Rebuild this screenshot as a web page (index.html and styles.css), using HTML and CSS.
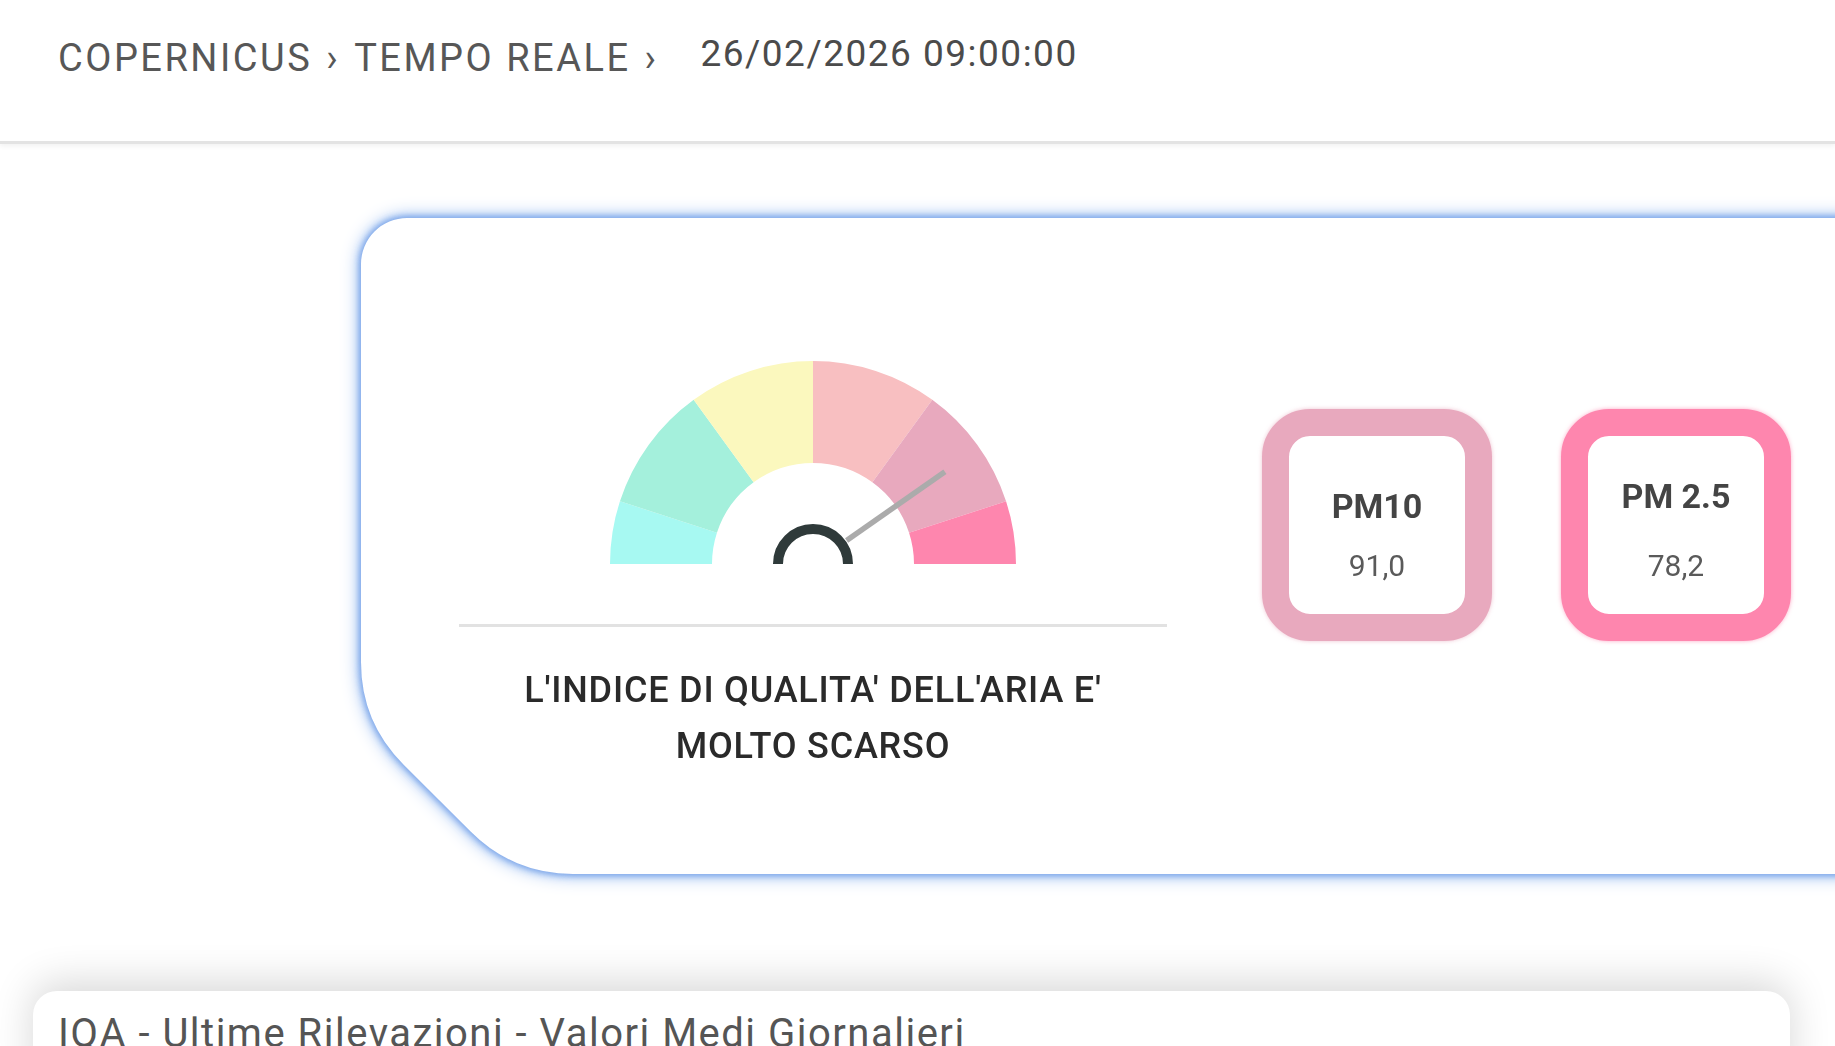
FILE: index.html
```html
<!DOCTYPE html>
<html lang="it">
<head>
    <meta charset="UTF-8">
    <meta name="viewport" content="width=device-width, initial-scale=1.0">
    <title>Copernicus - Tempo Reale</title>
    <link rel="stylesheet" href="styles.css">
</head>
<body>
    <header class="topbar">
        <nav class="crumbs">
            <span>COPERNICUS</span>
            <span class="sep">›</span>
            <span>TEMPO REALE</span>
            <span class="sep">›</span>
        </nav>
        <time class="stamp">26/02/2026 09:00:00</time>
    </header>

    <main>
        <section class="hero">
            <div class="aqi-glow">
                <div class="aqi-card">
                    <div class="gauge-col">
                        <svg class="gauge" viewBox="-205 -205 410 205">
                            <!-- sectors, left to right -->
                            <path fill="#a7f9f2" d="M -203 0 A 203 203 0 0 1 -193.07 -62.73 L -96.06 -31.21 A 101 101 0 0 0 -101 0 Z"/>
                            <path fill="#a4f0dc" d="M -193.07 -62.73 A 203 203 0 0 1 -119.32 -164.23 L -59.37 -81.71 A 101 101 0 0 0 -96.06 -31.21 Z"/>
                            <path fill="#fbf8be" d="M -119.32 -164.23 A 203 203 0 0 1 0 -203 L 0 -101 A 101 101 0 0 0 -59.37 -81.71 Z"/>
                            <path fill="#f8bfc1" d="M 0 -203 A 203 203 0 0 1 119.32 -164.23 L 59.37 -81.71 A 101 101 0 0 0 0 -101 Z"/>
                            <path fill="#e8a9be" d="M 119.32 -164.23 A 203 203 0 0 1 193.07 -62.73 L 96.06 -31.21 A 101 101 0 0 0 59.37 -81.71 Z"/>
                            <path fill="#fe86ae" d="M 193.07 -62.73 A 203 203 0 0 1 203 0 L 101 0 A 101 101 0 0 0 96.06 -31.21 Z"/>
                            <line x1="33.6" y1="-23.5" x2="131.9" y2="-92.3" stroke="#ababab" stroke-width="5.5"/>
                            <path d="M -35 0 A 35 35 0 0 1 35 0" fill="none" stroke="#2f3a3a" stroke-width="10"/>
                        </svg>
                        <div class="divider"></div>
                        <p class="caption">L'INDICE DI QUALITA' DELL'ARIA E' MOLTO SCARSO</p>
                    </div>

                    <div class="pm-list">
                        <div class="pm-box pm-mauve">
                            <span class="pm-label">PM10</span>
                            <span class="pm-value">91,0</span>
                        </div>
                        <div class="pm-box pm-pink">
                            <span class="pm-label pm-label-high">PM 2.5</span>
                            <span class="pm-value">78,2</span>
                        </div>
                    </div>
                </div>
            </div>
        </section>

        <section class="panel">
            <h2>IQA - Ultime Rilevazioni - Valori Medi Giornalieri</h2>
        </section>
    </main>
</body>
</html>
```

FILE: styles.css
```css
html, body {
    overflow: hidden;
}

body {
    margin: 0;
    background-color: #fff;
    font-family: Roboto, "Liberation Sans", sans-serif;
    color: #333;
}

.topbar {
    display: flex;
    align-items: flex-start;
    height: 144px;
    box-sizing: border-box;
    padding: 36px 58px 0;
    background: #fff;
    border-bottom: 3px solid #e3e3e3;
    box-shadow: 0 2px 5px rgba(0, 0, 0, 0.06);
}

.crumbs {
    display: flex;
    font-size: 38px;
    color: #575757;
    letter-spacing: 2.5px;
}

.crumbs .sep {
    margin: 0 14px;
}

.stamp {
    margin-left: 28px;
    margin-top: -4px;
    font-size: 37px;
    letter-spacing: 1.5px;
    color: #4b4b4b;
}

.hero {
    overflow: hidden;
    padding: 74px 0 24px 361px;
}

/* blue halo around the clipped card */
.aqi-glow {
    filter: drop-shadow(0 0 3px #7fa8ea) drop-shadow(0 0 3px #86adeb) drop-shadow(0 0 8px #a6c5f3);
}

.aqi-card {
    display: flex;
    align-items: flex-start;
    width: 1540px;
    height: 656px;
    box-sizing: border-box;
    padding: 141px 0 0 98px;
    background: #fff;
    clip-path: path('M 46 0 H 1540 V 656 H 212 Q 152 656 109.6 613.6 L 42.4 546.4 Q 0 504 0 444 V 46 A 46 46 0 0 1 46 0 Z');
}

.gauge-col {
    display: flex;
    flex-direction: column;
    align-items: center;
    width: 708px;
}

.gauge {
    display: block;
    width: 410px;
    height: 205px;
}

.divider {
    width: 100%;
    height: 3px;
    margin-top: 60px;
    background: #e2e2e2;
}

.caption {
    max-width: 620px;
    margin: 35px 0 0;
    font-size: 36px;
    font-weight: 500;
    line-height: 56px;
    letter-spacing: 0.8px;
    text-align: center;
    color: #2a2a2a;
}

.pm-list {
    display: flex;
    gap: 69px;
    margin: 50px 0 0 95px;
}

.pm-box {
    display: flex;
    flex-direction: column;
    align-items: center;
    justify-content: flex-end;
    width: 230px;
    height: 232px;
    box-sizing: border-box;
    padding-bottom: 28px;
    border: 27px solid;
    border-radius: 48px;
    background: #fff;
}

.pm-mauve {
    border-color: #e8a9be;
    box-shadow: 0 0 4px rgba(232, 169, 190, 0.7);
}

.pm-pink {
    border-color: #fe86ae;
    box-shadow: 0 0 4px rgba(254, 134, 174, 0.7);
}

.pm-label {
    font-size: 34px;
    font-weight: 700;
    line-height: 40px;
    color: #444;
}

.pm-value {
    margin-top: 20px;
    font-size: 30px;
    line-height: 40px;
    color: #5a5a5a;
}

.pm-label-high + .pm-value {
    margin-top: 30px;
}

.panel {
    margin: 93px 45px 0 33px;
    padding: 19px 25px 40px;
    background: #fff;
    border-radius: 24px;
    box-shadow: 0 -8px 40px rgba(0, 0, 0, 0.16);
}

.panel h2 {
    margin: 0;
    font-size: 40px;
    font-weight: 400;
    letter-spacing: 1.5px;
    color: #555;
}
```
